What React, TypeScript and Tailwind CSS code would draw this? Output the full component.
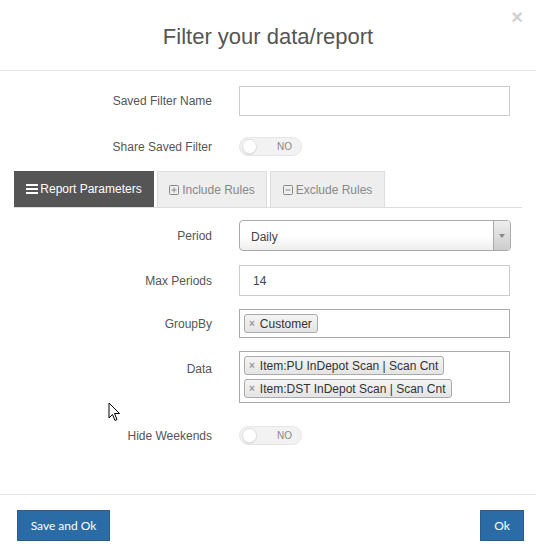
import React from 'react';

const labelCls = 'w-[212px] shrink-0 text-right text-[12px] text-[#555]';

function Toggle() {
    return (
        <div className="relative flex h-[19px] w-[63px] items-center rounded-full border border-[#e6e6e6] bg-[#f2f2f2]">
            <div className="ml-[2px] h-[15px] w-[15px] rounded-full border border-[#e0e0e0] bg-white shadow-[0_1px_1px_rgba(0,0,0,0.08)]" />
            <span className="ml-auto mr-[9px] text-[10px] text-[#888]">NO</span>
        </div>
    );
}

function Chip({ text }: { text: string }) {
    return (
        <div className="flex h-[19px] items-center rounded-[3px] border border-[#aaa] bg-gradient-to-b from-[#f4f4f4] to-[#e4e4e4] pl-[4px] pr-[5px] text-[12px] text-[#333]">
            <span className="mr-[5px] text-[10px] font-bold leading-none text-[#999]">×</span>
            {text}
        </div>
    );
}

function BarsIcon() {
    return (
        <svg width="12" height="10" viewBox="0 0 12 10" className="mr-[2px]">
            <rect x="0" y="0" width="12" height="2" fill="#fff" />
            <rect x="0" y="4" width="12" height="2" fill="#fff" />
            <rect x="0" y="8" width="12" height="2" fill="#fff" />
        </svg>
    );
}

function SquareIcon({ plus }: { plus?: boolean }) {
    return (
        <svg width="10" height="10" viewBox="0 0 10 10" className="mr-[3px]">
            <rect x="0.5" y="0.5" width="9" height="9" rx="1" fill="none" stroke="#888" />
            <line x1="2.5" y1="5" x2="7.5" y2="5" stroke="#888" />
            {plus && <line x1="5" y1="2.5" x2="5" y2="7.5" stroke="#888" />}
        </svg>
    );
}

export default function App() {
    return (
        <div
            className="relative h-[551px] w-[536px] overflow-hidden bg-white"
            style={{ fontFamily: '"Liberation Sans", Arial, sans-serif' }}
        >
            <div className="relative flex h-[71px] items-center justify-center border-b border-[#e5e5e5]">
                <h1 className="mt-[3px] text-[22px] text-[#555]">Filter your data/report</h1>
                <span className="absolute right-[13px] top-[2px] text-[20px] font-bold text-[#d0d0d0]">×</span>
            </div>

            <div className="mt-[15px] flex items-center">
                <div className={labelCls}>Saved Filter Name</div>
                <div className="ml-[27px] h-[30px] w-[271px] border border-[#ccc]" />
            </div>

            <div className="mt-[21px] flex items-center">
                <div className={labelCls}>Share Saved Filter</div>
                <div className="ml-[27px]">
                    <Toggle />
                </div>
            </div>

            <div className="mx-[14px] mt-[15px] flex h-[37px] border-b border-[#ddd]">
                <div className="flex w-[140px] items-center justify-center bg-[#555] text-[12px] text-white">
                    <BarsIcon />
                    Report Parameters
                </div>
                <div className="ml-[3px] flex w-[110px] items-center justify-center border border-b-0 border-[#ddd] bg-[#eee] text-[12px] text-[#888]">
                    <SquareIcon plus />
                    Include Rules
                </div>
                <div className="ml-[3px] flex w-[115px] items-center justify-center border border-b-0 border-[#ddd] bg-[#eee] text-[12px] text-[#888]">
                    <SquareIcon />
                    Exclude Rules
                </div>
            </div>

            <div className="mt-[12px] flex items-center">
                <div className={labelCls}>Period</div>
                <div className="ml-[27px] flex h-[31px] w-[272px] overflow-hidden rounded-[4px] border border-[#aaa] bg-gradient-to-b from-white from-50% to-[#eee]">
                    <span className="flex-1 pl-[11px] pt-[7px] text-[12px] text-[#444]">Daily</span>
                    <div className="flex w-[17px] items-center justify-center border-l border-[#aaa] bg-gradient-to-b from-[#eee] to-[#ccc]">
                        <svg width="6" height="4" viewBox="0 0 6 4">
                            <path d="M0 0 L6 0 L3 4 Z" fill="#888" />
                        </svg>
                    </div>
                </div>
            </div>

            <div className="mt-[14px] flex items-center">
                <div className={labelCls}>Max Periods</div>
                <div className="ml-[27px] flex h-[31px] w-[271px] items-center border border-[#ccc] pl-[13px] text-[12px] text-[#444]">
                    14
                </div>
            </div>

            <div className="mt-[13px] flex items-center">
                <div className={labelCls}>GroupBy</div>
                <div className="ml-[27px] flex h-[29px] w-[271px] items-center border border-[#aaa] px-[4px]">
                    <Chip text="Customer" />
                </div>
            </div>

            <div className="mt-[13px] flex items-start">
                <div className={`${labelCls} pt-[9px]`}>Data</div>
                <div className="ml-[27px] flex h-[52px] w-[271px] flex-col items-start justify-center gap-[4px] border border-[#aaa] px-[4px]">
                    <Chip text="Item:PU InDepot Scan | Scan Cnt" />
                    <Chip text="Item:DST InDepot Scan | Scan Cnt" />
                </div>
            </div>

            <div className="mt-[23px] flex items-center">
                <div className={labelCls}>Hide Weekends</div>
                <div className="ml-[27px]">
                    <Toggle />
                </div>
            </div>

            <div className="absolute left-0 right-0 top-[494px] flex justify-between border-t border-[#e5e5e5] px-[17px] pt-[15px]">
                <button
                    className="h-[31px] w-[93px] border border-[#2a5d8c] bg-[#2c6ca6] text-[12px] text-white"
                    style={{ fontFamily: 'Lato, sans-serif' }}
                >
                    Save and Ok
                </button>
                <button
                    className="mr-[-5px] h-[31px] w-[44px] border border-[#2a5d8c] bg-[#2c6ca6] text-[12px] text-white"
                    style={{ fontFamily: 'Lato, sans-serif' }}
                >
                    Ok
                </button>
            </div>

            <svg className="absolute left-[108px] top-[402px]" width="13" height="21" viewBox="0 0 13 21">
                <path d="M1 1 L1 16 L4.5 12.5 L7 18.5 L9 17.5 L6.5 11.5 L11.5 11.5 Z" fill="#fff" stroke="#000" strokeWidth="1" strokeLinejoin="round" />
            </svg>
        </div>
    );
}
